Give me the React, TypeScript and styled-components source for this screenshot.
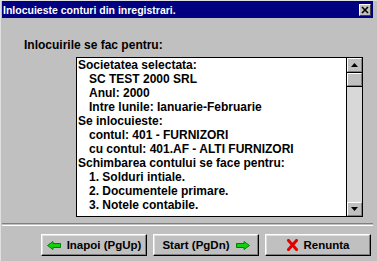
import React from 'react';
import styled, { createGlobalStyle } from 'styled-components';

const GlobalStyle = createGlobalStyle`
	html, body {
		margin: 0;
		padding: 0;
		background: #c0c0c0;
	}
	body {
		font-family: "Liberation Sans", Arial, sans-serif;
	}
`;

const Window = styled.div`
	width: 377px;
	height: 261px;
	box-sizing: border-box;
	background: #c0c0c0;
	border-top: 1px solid #e0e0e0;
	border-left: 1px solid #e0e0e0;
	display: flex;
	flex-direction: column;
	overflow: hidden;
`;

const TitleBar = styled.div`
	height: 17px;
	margin: 0 4px 0 1px;
	padding: 0 2px 0 1px;
	background: #000080;
	color: #fff;
	display: flex;
	align-items: center;
	justify-content: space-between;
	font-size: 10.5px;
	font-weight: bold;
`;

const CloseBox = styled.div`
	width: 12px;
	height: 12px;
	box-sizing: border-box;
	background: #c0c0c0;
	border: 1px solid;
	border-color: #fff #404040 #404040 #fff;
	display: flex;
	align-items: center;
	justify-content: center;
`;

const Label = styled.div`
	margin: 20px 0 0 23px;
	font-size: 12px;
	line-height: 14px;
	font-weight: bold;
	color: #000;
`;

const ListBox = styled.div`
	margin: 5px 0 0 75px;
	width: 287px;
	height: 160px;
	box-sizing: border-box;
	border: 1px solid #000;
	display: flex;
`;

const ListText = styled.div`
	flex: 1;
	background: #fff;
	padding-left: 1px;
	font-size: 12px;
	line-height: 14px;
	font-weight: bold;
	color: #000;
	overflow: hidden;
	white-space: nowrap;
`;

const Line = styled.div<{ $indent?: boolean }>`
	padding-left: ${p => (p.$indent ? '11px' : '0')};
`;

const ScrollBar = styled.div`
	width: 15px;
	border-left: 1px solid #000;
	display: flex;
	flex-direction: column;
	background: #d8d8d8;
`;

const ScrollButton = styled.div`
	height: 14px;
	box-sizing: border-box;
	background: #c0c0c0;
	border-top: 1px solid #fff;
	border-left: 1px solid #fff;
	border-right: 1px solid #808080;
	border-bottom: 1px solid #808080;
	box-shadow: 0 1px 0 #000;
	display: flex;
	align-items: center;
	justify-content: center;
`;

const Thumb = styled(ScrollButton)`
	margin-top: 1px;
	height: 13px;
`;

const Track = styled.div`
	flex: 1;
`;

const Separator = styled.div`
	margin: 6px 4px 0 1px;
	height: 1px;
	border-top: 1px solid #808080;
	border-bottom: 1px solid #fff;
`;

const ButtonRow = styled.div`
	display: flex;
	gap: 6px;
	margin: 8px 0 0 40px;
`;

const Button = styled.div`
	width: 106px;
	height: 22px;
	box-sizing: border-box;
	background: #c0c0c0;
	border: 1px solid;
	border-color: #fff #000 #000 #fff;
	box-shadow: inset -1px -1px #808080, inset 1px 1px #e0e0e0;
	display: flex;
	align-items: center;
	justify-content: center;
	gap: 6px;
	font-size: 11.5px;
	font-weight: bold;
	color: #000;
`;

const ArrowIcon = ({ dir }: { dir: 'left' | 'right' }) => (
	<svg width="14" height="9" viewBox="0 0 14 9" style={dir === 'right' ? { transform: 'scaleX(-1)' } : undefined}>
		<path d="M0.5 4.5 L6 0.5 V2.5 H13.5 V6.5 H6 V8.5 Z" fill="#10d010" stroke="#008000" strokeWidth="1" />
	</svg>
);

const CrossIcon = () => (
	<svg width="11" height="12" viewBox="0 0 11 12">
		<path d="M1.5 1.5 L9.5 10.5 M9.5 1.5 L1.5 10.5" stroke="#e00000" strokeWidth="3" strokeLinecap="square" />
	</svg>
);

const lines: { text: string; indent?: boolean }[] = [
	{ text: 'Societatea selectata:' },
	{ text: 'SC TEST 2000 SRL', indent: true },
	{ text: 'Anul: 2000', indent: true },
	{ text: 'Intre lunile: Ianuarie-Februarie', indent: true },
	{ text: 'Se inlocuieste:' },
	{ text: 'contul: 401 - FURNIZORI', indent: true },
	{ text: 'cu contul: 401.AF - ALTI FURNIZORI', indent: true },
	{ text: 'Schimbarea contului se face pentru:' },
	{ text: '1. Solduri intiale.', indent: true },
	{ text: '2. Documentele primare.', indent: true },
	{ text: '3. Notele contabile.', indent: true }
];

const App: React.FC = () => {
	return (
		<>
			<GlobalStyle />
			<Window>
				<TitleBar>
					<span>Inlocuieste conturi din inregistrari.</span>
					<CloseBox>
						<svg width="8" height="8" viewBox="0 0 8 8">
							<path d="M1 1 L7 7 M7 1 L1 7" stroke="#000" strokeWidth="1.6" />
						</svg>
					</CloseBox>
				</TitleBar>
				<Label>Inlocuirile se fac pentru:</Label>
				<ListBox>
					<ListText>
						{lines.map((l, i) => (
							<Line key={i} $indent={l.indent}>
								{l.text}
							</Line>
						))}
					</ListText>
					<ScrollBar>
						<ScrollButton>
							<svg width="7" height="4" viewBox="0 0 7 4">
								<path d="M3.5 0 L7 4 H0 Z" fill="#000" />
							</svg>
						</ScrollButton>
						<Thumb />
						<Track />
						<ScrollButton>
							<svg width="7" height="4" viewBox="0 0 7 4">
								<path d="M0 0 H7 L3.5 4 Z" fill="#000" />
							</svg>
						</ScrollButton>
					</ScrollBar>
				</ListBox>
				<Separator />
				<ButtonRow>
					<Button>
						<ArrowIcon dir="left" />
						<span>Inapoi (PgUp)</span>
					</Button>
					<Button>
						<span>Start (PgDn)</span>
						<ArrowIcon dir="right" />
					</Button>
					<Button>
						<CrossIcon />
						<span>Renunta</span>
					</Button>
				</ButtonRow>
			</Window>
		</>
	);
};

export default App;
